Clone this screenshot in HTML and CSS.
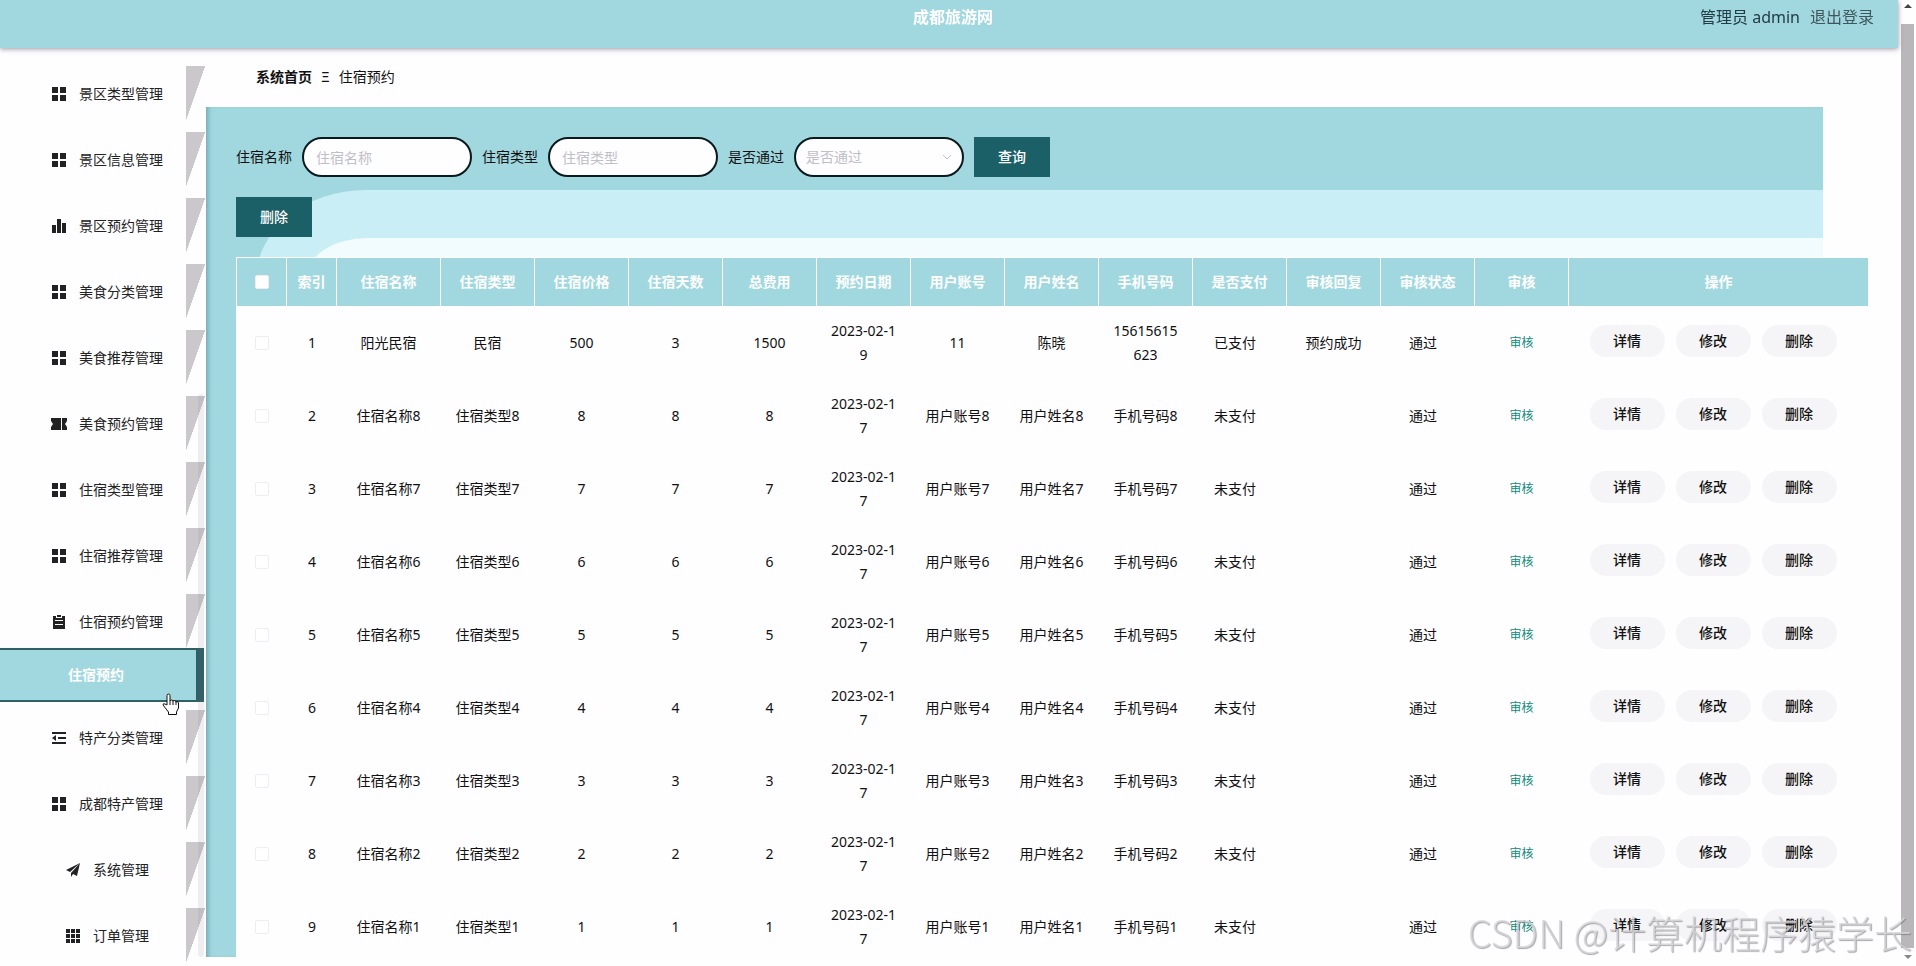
FILE: index.html
```html
<!DOCTYPE html>
<html lang="zh-CN">
<head>
    <meta charset="UTF-8">
    <meta name="viewport" content="width=device-width, initial-scale=1.0">
    <title>成都旅游网</title>
    <link rel="stylesheet" href="styles.css">
</head>
<body>
    <svg class="sprite" aria-hidden="true">
        <symbol id="i-menu" viewBox="0 0 14 14"><path d="M0 0h6v6H0zM8 0h6v6H8zM0 8h6v6H0zM8 8h6v6H8z"/></symbol>
        <symbol id="i-chart" viewBox="0 0 14 14"><path d="M0 6h4v8H0zM5 0h4v14H5zM10 4h4v10h-4z"/></symbol>
        <symbol id="i-ticket" viewBox="0 0 16 12"><path d="M0 0h10v12H0V9l2-3-2-3zM11 0h5v3l-2 3 2 3v3h-5z"/></symbol>
        <symbol id="i-order" viewBox="0 0 14 14"><path fill-rule="evenodd" d="M1 1h3v2h6V1h3v13H1zM3 5v1h8V5zM3 9v1h8V9zM5 0h4v2H5z"/></symbol>
        <symbol id="i-fold" viewBox="0 0 14 12"><path d="M0 0h14v2H0zM6 5h8v2H6zM0 10h14v2H0zM0 6l4-3v6z"/></symbol>
        <symbol id="i-send" viewBox="0 0 14 14"><path d="M14 0L0 7l4 2zM14 0L5 10v4l2-3 4 2z"/></symbol>
        <symbol id="i-grid" viewBox="0 0 14 14"><path d="M0 0h4v4H0zM5 0h4v4H5zM10 0h4v4h-4zM0 5h4v4H0zM5 5h4v4H5zM10 5h4v4h-4zM0 10h4v4H0zM5 10h4v4H5zM10 10h4v4h-4z"/></symbol>
    </svg>

    <div class="app">
        <header class="header">
            <h1>成都旅游网</h1>
            <div class="user">
                <span>管理员 admin</span>
                <a href="#">退出登录</a>
            </div>
        </header>

        <div class="body">
            <nav class="sidebar">
                <ul class="menu">
                    <li><a href="#"><svg><use href="#i-menu"/></svg>景区类型管理</a></li>
                    <li><a href="#"><svg><use href="#i-menu"/></svg>景区信息管理</a></li>
                    <li><a href="#"><svg><use href="#i-chart"/></svg>景区预约管理</a></li>
                    <li><a href="#"><svg><use href="#i-menu"/></svg>美食分类管理</a></li>
                    <li><a href="#"><svg><use href="#i-menu"/></svg>美食推荐管理</a></li>
                    <li><a href="#"><svg class="wide"><use href="#i-ticket"/></svg>美食预约管理</a></li>
                    <li><a href="#"><svg><use href="#i-menu"/></svg>住宿类型管理</a></li>
                    <li><a href="#"><svg><use href="#i-menu"/></svg>住宿推荐管理</a></li>
                    <li class="open">
                        <a href="#"><svg><use href="#i-order"/></svg>住宿预约管理</a>
                        <a href="#" class="sub">住宿预约
                            <svg class="pointer" viewBox="0 0 17 22"><path d="M5 12V2.500Q5 1 6.500 1T8 2.500V8q0-1 1.500-1T11 8.500q0-1 1.500-1T14 9.500q0-1 1-1t1.500 1.500v5l-2 4v2.500H6.500V19L1 12q0-2 2-1z"/><path d="M8 8v4M11 8.500V12M14 9.500V12"/></svg>
                        </a>
                    </li>
                    <li><a href="#"><svg><use href="#i-fold"/></svg>特产分类管理</a></li>
                    <li><a href="#"><svg><use href="#i-menu"/></svg>成都特产管理</a></li>
                    <li><a href="#"><svg><use href="#i-send"/></svg>系统管理</a></li>
                    <li><a href="#"><svg><use href="#i-grid"/></svg>订单管理</a></li>
                </ul>
                <div class="menu-bar"></div>
            </nav>

            <main class="content">
                <div class="breadcrumb"><a href="#">系统首页</a><span>Ξ</span><span>住宿预约</span></div>

                <section class="panel">
                    <form class="search">
                        <label for="name">住宿名称</label>
                        <input type="text" id="name" placeholder="住宿名称">
                        <label for="type">住宿类型</label>
                        <input type="text" id="type" placeholder="住宿类型">
                        <label for="pass">是否通过</label>
                        <div class="select">
                            <select id="pass">
                                <option value="">是否通过</option>
                                <option>通过</option>
                                <option>未通过</option>
                            </select>
                            <svg viewBox="0 0 10 6"><path d="M1 1l4 4 4-4"/></svg>
                        </div>
                        <button type="button" class="btn">查询</button>
                    </form>
                    <div class="actions">
                        <button type="button" class="btn">删除</button>
                    </div>

                    <table class="list">
                        <colgroup>
                            <col class="c-small"><col class="c-small"><col class="c-name">
                            <col class="c-cell" span="12">
                            <col>
                        </colgroup>
                        <thead>
                            <tr>
                                <th><input type="checkbox" aria-label="全选"></th>
                                <th>索引</th><th>住宿名称</th><th>住宿类型</th><th>住宿价格</th><th>住宿天数</th><th>总费用</th><th>预约日期</th><th>用户账号</th><th>用户姓名</th><th>手机号码</th><th>是否支付</th><th>审核回复</th><th>审核状态</th><th>审核</th><th>操作</th>
                            </tr>
                        </thead>
                        <tbody id="rows"></tbody>
                    </table>
                </section>
            </main>
        </div>
    </div>

    <div class="scrollbar">
        <svg viewBox="0 0 8 4"><path d="M0 4l4-4 4 4z"/></svg>
        <div class="thumb"></div>
        <svg viewBox="0 0 8 4"><path d="M0 0h8L4 4z"/></svg>
    </div>
    <div class="watermark">CSDN @计算机程序猿学长</div>

    <script src="script.js"></script>
</body>
</html>
```

FILE: styles.css
```css
* {
    box-sizing: border-box;
}
body {
    margin: 0;
    font-family: "Noto Sans", "Noto Sans CJK SC", sans-serif;
    font-size: 14px;
    line-height: 24px;
    color: #111;
    background: #fefdff;
    overflow: hidden;
}
a {
    color: inherit;
    text-decoration: none;
}
button, input, select {
    font: inherit;
}
.sprite {
    display: none;
}
.app {
    height: 100vh;
    margin-right: 17px;
    display: flex;
    flex-direction: column;
}

/* header */
.header {
    position: relative;
    z-index: 2;
    height: 48px;
    margin-right: 1px;
    padding: 5px 24px 0 0;
    display: grid;
    grid-template-columns: 1fr auto 1fr;
    align-items: start;
    background: #a1d8e0;
    box-shadow: 0 1px 5px rgba(60, 50, 70, 0.5);
}
.header h1 {
    grid-column: 2;
    margin: 0 0 0 32px;
    font-size: 16px;
    line-height: 24px;
    color: #fff;
}
.user {
    display: flex;
    justify-content: flex-end;
    gap: 10px;
    font-size: 16px;
    color: #223c46;
}
.user a {
    color: #40565e;
}

/* sidebar */
.body {
    flex: 1;
    min-height: 0;
    display: flex;
}
.sidebar {
    position: relative;
    z-index: 1;
    flex: none;
    width: 206px;
    padding-top: 18px;
    overflow: hidden;
    background: #fefdff;
}
.menu {
    margin: 0;
    padding: 0;
    list-style: none;
}
.menu li {
    margin-bottom: 12px;
}
.menu li.open {
    margin-bottom: 8px;
}
.menu a {
    display: flex;
    align-items: center;
    justify-content: center;
    height: 54px;
    margin-right: 1px;
    padding: 2px 0 0 10px;
    background: linear-gradient(to bottom right, #cbc8cc 50%, transparent 51%) right / 19px 54px no-repeat;
    color: #222;
}
.menu svg {
    width: 14px;
    height: 14px;
    margin-right: 13px;
    fill: #222;
}
.menu svg.wide {
    width: 16px;
    margin: 0 12px 0 -1px;
}
.menu a.sub {
    position: relative;
    margin-right: 2px;
    padding: 0 4px 0 0;
    border: solid #2f6066;
    border-width: 2px 8px 2px 0;
    background: #a1d8e0;
    color: #fff;
    font-weight: bold;
}
.menu .pointer {
    position: absolute;
    left: 162px;
    top: 43px;
    width: 17px;
    height: 22px;
    margin: 0;
    fill: #fff;
    stroke: #111;
}
.menu-bar {
    position: absolute;
    right: 2px;
    top: 346px;
    bottom: 9px;
    width: 6px;
    border-radius: 3px;
    background: rgba(100, 110, 120, 0.1);
}

/* content */
.content {
    flex: 1;
    min-width: 0;
    padding: 0 76px 9px 0;
    display: flex;
    flex-direction: column;
}
.breadcrumb {
    height: 59px;
    padding: 17px 50px;
    display: flex;
    gap: 9px;
}
.breadcrumb a {
    font-weight: bold;
}
.panel {
    position: relative;
    flex: 1;
    min-height: 0;
    padding: 30px;
    background: #a1d8e0;
    box-shadow: inset 5px 0 5px -3px rgba(40, 90, 100, 0.4);
}
/* rounded bands behind the toolbar */
.panel::before, .panel::after {
    content: "";
    position: absolute;
    right: 0;
}
.panel::before {
    left: 50px;
    top: 83px;
    height: 90px;
    border-top-left-radius: 110px 90px;
    background: #caeef5;
}
.panel::after {
    left: 100px;
    top: 131px;
    height: 42px;
    border-top-left-radius: 62px 40px;
    background: #f2fbfe;
}
.search, .actions, .list {
    position: relative;
    z-index: 1;
}
.search {
    display: flex;
    align-items: center;
    gap: 10px;
}
.search input, .search select {
    width: 170px;
    height: 40px;
    padding: 0 12px;
    border: 2px solid #0b1a1d;
    border-radius: 20px;
    background: #fefdff;
    color: #c0bfc6;
    outline: none;
}
.search input::placeholder {
    color: #c0bfc6;
}
.search select {
    padding: 0 10px;
    appearance: none;
}
.select {
    position: relative;
    display: flex;
}
.select svg {
    position: absolute;
    right: 12px;
    top: 17px;
    width: 10px;
    height: 6px;
    fill: none;
    stroke: #c0bfc6;
}
.btn {
    width: 76px;
    height: 40px;
    padding: 0;
    border: 0;
    background: #1b6067;
    color: #fff;
    font-weight: 500;
}
.actions {
    display: flex;
    margin: 20px 0;
}

/* table */
.list {
    width: calc(100% + 75px);
    table-layout: fixed;
    border-collapse: separate;
    border-spacing: 0;
    border-left: 1px solid #fff;
    background: #fefdff;
    text-align: center;
}
.c-small {
    width: 50px;
}
.c-name {
    width: 104px;
}
.c-cell {
    width: 94px;
}
.list th {
    height: 49px;
    padding: 0;
    border-top: 1px solid #fff;
    border-right: 1px solid #fff;
    background: #a1d8e0;
    color: #fff;
}
.list th:last-child {
    border-right: 0;
}
.list td {
    height: 73px;
    padding: 0 13px 0 12px;
    word-break: break-all;
}
.list td:nth-child(2), .list td:first-child {
    padding: 0;
}
/* pay and audit state */
.list td:nth-child(12), .list td:nth-child(14) {
    padding: 0 22px 0 12px;
}
.list input {
    appearance: none;
    display: block;
    width: 14px;
    height: 14px;
    margin: 0 auto;
    border: 1px solid #efedf1;
    border-radius: 2px;
    background: #fff;
}
.list .audit {
    padding: 0;
    border: 0;
    background: none;
    color: #108a78;
    font-size: 12px;
}
.list td:last-child {
    padding: 0 0 4px;
}
.ops {
    display: flex;
    justify-content: center;
}
.ops button {
    width: 75px;
    height: 32px;
    margin-right: 11px;
    padding: 0;
    border: 0;
    border-radius: 16px;
    background: #f5f4f6;
    color: #111;
    font-weight: 500;
}

/* window scrollbar */
.scrollbar {
    position: fixed;
    top: 0;
    right: 0;
    bottom: 0;
    width: 17px;
    padding: 4px 2px 7px;
    display: flex;
    flex-direction: column;
    align-items: center;
    gap: 16px;
}
.scrollbar svg {
    width: 8px;
    height: 4px;
    fill: #444;
}
.scrollbar svg:last-child {
    margin-top: -9px;
    fill: #888;
}
.thumb {
    flex: 1;
    width: 13px;
    background: #b9b7ba;
}
.watermark {
    position: fixed;
    z-index: 3;
    right: 4px;
    bottom: 10px;
    font-family: "Noto Sans CJK SC", sans-serif;
    font-size: 38px;
    font-weight: 300;
    line-height: 48px;
    color: rgba(215, 214, 218, 0.8);
    text-shadow: 1px 1px 1px rgba(110, 110, 115, 0.6);
    pointer-events: none;
}
```

FILE: script.js
```javascript
const orders = [
    ['阳光民宿', '民宿', 500, 3, 1500, '2023-02-19', '11', '陈晓', '15615615623', '已支付', '预约成功', '通过']
];
for (let n = 8; n > 0; n--) {
    orders.push(['住宿名称' + n, '住宿类型' + n, n, n, n, '2023-02-17', '用户账号' + n, '用户姓名' + n, '手机号码' + n, '未支付', '', '通过']);
}

document.getElementById('rows').innerHTML = orders.map((order, i) => `
    <tr>
        <td><input type="checkbox" aria-label="选择第${i + 1}行"></td>
        <td>${i + 1}</td>
        ${order.map(value => `<td>${value}</td>`).join('')}
        <td><button type="button" class="audit">审核</button></td>
        <td>
            <div class="ops">
                <button type="button">详情</button>
                <button type="button">修改</button>
                <button type="button">删除</button>
            </div>
        </td>
    </tr>
`).join('');
```
